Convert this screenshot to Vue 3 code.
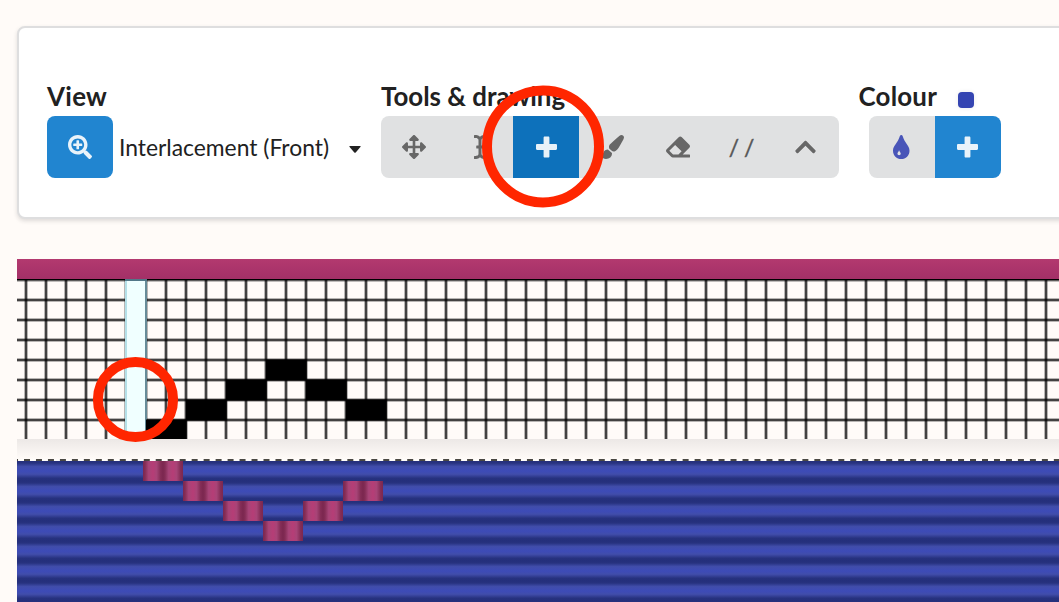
<script setup>
const icons = {
  zoom: { w: 512, d: 'M304 192v32c0 6.6-5.4 12-12 12h-56v56c0 6.6-5.4 12-12 12h-32c-6.6 0-12-5.4-12-12v-56h-56c-6.6 0-12-5.4-12-12v-32c0-6.6 5.4-12 12-12h56v-56c0-6.6 5.4-12 12-12h32c6.6 0 12 5.4 12 12v56h56c6.6 0 12 5.4 12 12zm201 284.7L476.7 505c-9.4 9.4-24.6 9.4-33.9 0L343 405.3c-4.5-4.5-7-10.6-7-17V372c-35.3 27.6-79.7 44-128 44C93.1 416 0 322.9 0 208S93.1 0 208 0s208 93.1 208 208c0 48.3-16.4 92.7-44 128h16.3c6.4 0 12.5 2.5 17 7l99.7 99.7c9.3 9.4 9.3 24.6 0 34zM344 208c0-75.2-60.8-136-136-136S72 132.8 72 208s60.8 136 136 136 136-60.8 136-136z' },
  move: { w: 512, d: 'M352.201 425.775l-79.196 79.196c-9.373 9.373-24.568 9.373-33.941 0l-79.196-79.196c-15.119-15.119-4.411-40.971 16.971-40.97h51.162L228 284H127.196v51.162c0 21.382-25.851 32.09-40.971 16.971L7.029 272.937c-9.373-9.373-9.373-24.569 0-33.941L86.225 159.8c15.119-15.119 40.971-4.411 40.971 16.971V228H228V127.196h-51.23c-21.382 0-32.09-25.851-16.971-40.971l79.196-79.196c9.373-9.373 24.568-9.373 33.941 0l79.196 79.196c15.119 15.119 4.411 40.971-16.971 40.971h-51.162V228h100.804v-51.162c0-21.382 25.851-32.09 40.97-16.971l79.196 79.196c9.373 9.373 9.373 24.569 0 33.941L425.773 352.2c-15.119 15.119-40.971 4.411-40.97-16.971V284H284v100.804h51.23c21.382 0 32.09 25.851 16.971 40.971z' },
  cursor: { w: 256, d: 'M256 52.048V12.065C256 5.496 250.726.148 244.158.066 211.621-.344 166.469.011 128 37.959 90.266.736 46.979-.114 11.913.114 5.318.157 0 5.519 0 12.114v39.645c0 6.687 5.458 12.078 12.145 11.998C38.111 63.447 96 67.243 96 112.182V224H60c-6.627 0-12 5.373-12 12v40c0 6.627 5.373 12 12 12h36v112c0 44.932-56.075 48.031-83.95 47.959C5.404 447.942 0 453.306 0 459.952v39.983c0 6.569 5.274 11.917 11.842 11.999 32.537.409 77.689.054 116.158-37.894 37.734 37.223 81.021 38.073 116.087 37.845 6.595-.043 11.913-5.405 11.913-12V460.24c0-6.687-5.458-12.078-12.145-11.998C217.889 448.553 160 444.939 160 400V288h36c6.627 0 12-5.373 12-12v-40c0-6.627-5.373-12-12-12h-36V112.182c0-44.932 56.075-48.213 83.95-48.142 6.646.018 12.05-5.346 12.05-11.992z' },
  plus: { w: 448, d: 'M448 294.200v-76.400c0-13.300-10.700-24-24-24H286.200V56c0-13.300-10.700-24-24-24h-76.400c-13.300 0-24 10.700-24 24v137.800H24c-13.300 0-24 10.700-24 24v76.400c0 13.300 10.700 24 24 24h137.800V456c0 13.300 10.700 24 24 24h76.400c13.300 0 24-10.700 24-24V318.200H424c13.300 0 24-10.700 24-24z' },
  brush: { w: 512, d: 'M167.02 309.34c-40.12 2.58-76.53 17.86-97.19 72.3-2.35 6.21-8 9.98-14.59 9.98-11.11 0-45.46-27.67-55.25-34.35C0 439.62 37.93 512 128 512c75.86 0 128-43.77 128-120.19 0-3.11-.65-6.08-.97-9.13l-88.01-73.34zM457.89 0c-15.16 0-29.37 6.71-40.21 16.45C213.27 199.05 192 203.34 192 257.09c0 13.7 3.25 26.76 8.73 38.7l63.82 53.18c7.21 1.8 14.64 3.03 22.39 3.03 62.11 0 98.11-45.47 211.16-256.46 7.38-14.35 13.9-29.85 13.9-45.99C512 20.64 486 0 457.89 0z' },
  eraser: { w: 512, d: 'M497.941 273.941c18.745-18.745 18.745-49.137 0-67.882l-160-160c-18.745-18.745-49.136-18.746-67.883 0l-256 256c-18.745 18.745-18.745 49.137 0 67.882l96 96A48.004 48.004 0 0 0 144 480h356c6.627 0 12-5.373 12-12v-40c0-6.627-5.373-12-12-12H355.883l142.058-142.059zm-302.627-62.627l137.373 137.373L265.373 416H150.628l-80-80 124.686-124.686z' },
  up: { w: 448, d: 'M240.971 130.524l194.343 194.343c9.373 9.373 9.373 24.569 0 33.941l-22.667 22.667c-9.357 9.357-24.522 9.375-33.901.04L224 227.495 69.255 381.516c-9.379 9.335-24.544 9.317-33.901-.04l-22.667-22.667c-9.373-9.373-9.373-24.569 0-33.941L207.03 130.525c9.372-9.373 24.568-9.373 33.941-.001z' },
  drop: { w: 352, d: 'M205.22 22.09c-7.94-28.78-49.44-30.12-58.44 0C100.01 179.85 0 222.72 0 333.91 0 432.35 78.72 512 176 512s176-79.65 176-178.09c0-111.75-99.79-153.34-146.78-311.82zM130 432c-20 0-35-16-35-36 0-22 20-31 29-62 2-7 10-7 12 0 9 31 29 40 29 62 0 20-15 36-35 36z' }
}

const tools = [
  { icon: 'move' },
  { icon: 'cursor' },
  { icon: 'plus', active: true },
  { icon: 'brush' },
  { icon: 'eraser' },
  { label: '/ /' },
  { icon: 'up' }
]

// Threading draft and cloth, in coordinates local to the drawing area
const columns = Array.from({ length: 52 }, (_, i) => 9 + i * 20)
const rows = Array.from({ length: 8 }, (_, i) => 21 + i * 20)
const filled = [[129, 161], [169, 141], [209, 121], [249, 101], [289, 121], [329, 141]]
const wefts = Array.from({ length: 8 }, (_, i) => 202 + i * 20)
const warps = [[126, 202], [166, 222], [206, 242], [246, 262], [286, 242], [326, 222]]
</script>

<template>
  <div class="page">
    <section class="panel">
      <div class="group view">
        <h3>View</h3>
        <div class="line">
          <button class="btn primary solo">
            <svg class="icon" :viewBox="`0 0 ${icons.zoom.w} 512`"><path :d="icons.zoom.d" /></svg>
          </button>
          <span class="choice">Interlacement (Front)</span>
          <svg class="caret" viewBox="0 0 12 7"><path d="M1 0h10q1 0 .6.8L6.700 6.400Q6 7 5.300 6.400L.4.8Q0 0 1 0z" /></svg>
        </div>
      </div>
      <div class="group draw">
        <h3>Tools &amp; drawing</h3>
        <div class="buttons">
          <button v-for="(t, i) in tools" :key="i" class="btn" :class="{ active: t.active, text: t.label }">
            <svg v-if="t.icon" class="icon" :viewBox="`0 0 ${icons[t.icon].w} 512`"><path :d="icons[t.icon].d" /></svg>
            <span v-else>{{ t.label }}</span>
          </button>
        </div>
      </div>
      <div class="group colour">
        <h3>Colour <i class="swatch"></i></h3>
        <div class="buttons pair">
          <button class="btn ink">
            <svg class="icon" :viewBox="`0 0 ${icons.drop.w} 512`"><path fill-rule="evenodd" :d="icons.drop.d" /></svg>
          </button>
          <button class="btn primary">
            <svg class="icon" :viewBox="`0 0 ${icons.plus.w} 512`"><path :d="icons.plus.d" /></svg>
          </button>
        </div>
      </div>
    </section>

    <svg class="draft" width="1042" height="343" viewBox="0 0 1042 343">
      <defs>
        <linearGradient id="bar" x1="0" y1="0" x2="0" y2="1">
          <stop offset="0" stop-color="#b3396f" /><stop offset="1" stop-color="#a33067" />
        </linearGradient>
        <linearGradient id="gap" x1="0" y1="0" x2="0" y2="1">
          <stop offset="0" stop-color="#ece8e6" /><stop offset="1" stop-color="#fffbf8" />
        </linearGradient>
        <linearGradient id="weft" x1="0" y1="0" x2="0" y2="1">
          <stop offset="0" stop-color="#242f7b" /><stop offset=".1" stop-color="#27327f" />
          <stop offset=".28" stop-color="#414dab" /><stop offset=".5" stop-color="#3d4bb7" />
          <stop offset=".66" stop-color="#414dab" /><stop offset=".86" stop-color="#27327f" />
          <stop offset="1" stop-color="#242f7b" />
        </linearGradient>
        <linearGradient id="warp" x1="0" y1="0" x2="1" y2="0">
          <stop offset="0" stop-color="#7b274f" /><stop offset=".1" stop-color="#842d56" />
          <stop offset=".28" stop-color="#a74477" /><stop offset=".5" stop-color="#b63d76" />
          <stop offset=".68" stop-color="#a74477" /><stop offset=".88" stop-color="#842d56" />
          <stop offset="1" stop-color="#7b274f" />
        </linearGradient>
      </defs>
      <rect width="1042" height="20" fill="url(#bar)" />
      <g v-for="x in columns" :key="'c' + x">
        <rect :x="x - 2" y="20" width="4" height="160" fill="#000" fill-opacity=".28" />
        <rect :x="x - 1" y="20" width="2" height="160" fill="#000" fill-opacity=".64" />
      </g>
      <g v-for="y in rows" :key="'r' + y">
        <rect x="0" :y="y - 2" width="1042" height="4" fill="#000" fill-opacity=".28" :visibility="y === 21 ? 'hidden' : 'visible'" />
        <rect x="0" :y="y - 1" width="1042" height="2" fill="#000" fill-opacity=".64" />
      </g>
      <rect y="20" width="1042" height="1" />
      <rect y="22" width="1042" height="1" fill-opacity=".25" />
      <rect x="108" y="20" width="22" height="160" fill="#f0ffff" />
      <rect x="108" y="20" width="2" height="160" fill="#b5e0e8" />
      <rect x="128" y="20" width="2" height="160" fill="#668b98" />
      <rect x="108" y="20" width="22" height="2" fill="#527788" />
      <rect v-for="c in filled" :key="'f' + c[0]" :x="c[0]" :y="c[1] - .5" width="40.7" :height="c[1] === 161 ? 19.5 : 21" />
      <rect y="180" width="1042" height="20" fill="url(#gap)" />
      <rect v-for="y in wefts" :key="'w' + y" x="0" :y="y" width="1042" height="20" fill="url(#weft)" />
      <g v-for="c in warps" :key="'p' + c[0]">
        <rect :x="c[0]" :y="c[1]" width="20" height="20" fill="url(#warp)" />
        <rect :x="c[0] + 20" :y="c[1]" width="20" height="20" fill="url(#warp)" />
      </g>
      <rect y="200" width="1042" height="2" fill="#fffdfb" />
      <path d="M-4.975 201H1042" stroke="#4a4843" stroke-width="2" stroke-dasharray="6 5.975" />
    </svg>

    <svg class="marks" width="1059" height="602" viewBox="0 0 1059 602">
      <circle cx="543" cy="146.400" r="56" />
      <circle cx="135.500" cy="399.500" r="37.600" />
    </svg>
  </div>
</template>

<style>
html, body { margin: 0; background: #fffbf8; overflow: hidden; }
</style>

<style scoped>
.page {
  position: relative;
  box-sizing: border-box;
  width: 1059px;
  height: 602px;
  padding: 26px 0 0 17px;
  overflow: hidden;
  background: #fffbf8;
  color: #212121;
  font-family: Lato, "Liberation Sans", sans-serif;
}
.panel {
  box-sizing: border-box;
  display: flex;
  height: 193px;
  width: 1080px;
  padding: 51px 0 0 28px;
  background: #fff;
  border: 2px solid #dededf;
  border-radius: 8px;
  box-shadow: 0 2px 4px rgba(34, 36, 38, .15);
}
.group h3 {
  display: flex;
  align-items: center;
  height: 34px;
  margin: 0 0 3px;
  font-size: 25.900px;
  line-height: 34px;
  font-weight: 700;
  white-space: nowrap;
}
.view { width: 334px; }
.view h3 { letter-spacing: .3px; }
.draw { width: 478px; }
.colour h3 { margin-left: -.5px; letter-spacing: .2px; }
.line { display: flex; align-items: center; }
.choice { margin: 0 0 0 6px; font-size: 22.850px; line-height: 30px; white-space: nowrap; width: 210px; }
.caret { width: 12px; height: 7px; margin: 4px 0 0 20px; fill: #212121; }
.buttons { display: flex; width: 458px; border-radius: 8px; overflow: hidden; }
.pair { width: 132px; margin-left: 10px; }
.btn {
  flex: 0 0 66px;
  display: flex;
  align-items: center;
  justify-content: center;
  height: 62px;
  padding: 0;
  border: 0;
  background: #e0e1e2;
  color: #676767;
  font: 400 24px/30px Lato, sans-serif;
}
.btn:last-child { flex-grow: 1; }
.pair .btn { padding-right: 1px; }
.solo { flex-grow: 0 !important; border-radius: 8px; }
.text {
  flex-basis: 61px;
  color: #575757;
  font-size: 22.850px;
  word-spacing: -1px;
  -webkit-text-stroke: .4px #575757;
}
.primary { background: #2185d0; color: #e9f3fa; }
.active { background: #0d71bb; color: #e7f1f8; }
.ink { color: #4955b8; }
.icon { height: 24px; fill: currentColor; }
.swatch {
  width: 16px;
  height: 16px;
  margin: 8px 0 0 21px;
  border-radius: 4px;
  background: #3545b2;
  box-shadow: 0 0 5px rgba(0, 0, 0, .08);
}
.draft { display: block; margin-top: 40px; }
.marks { position: absolute; left: 0; top: 0; fill: none; stroke: #ff2600; stroke-width: 10px; }
</style>
